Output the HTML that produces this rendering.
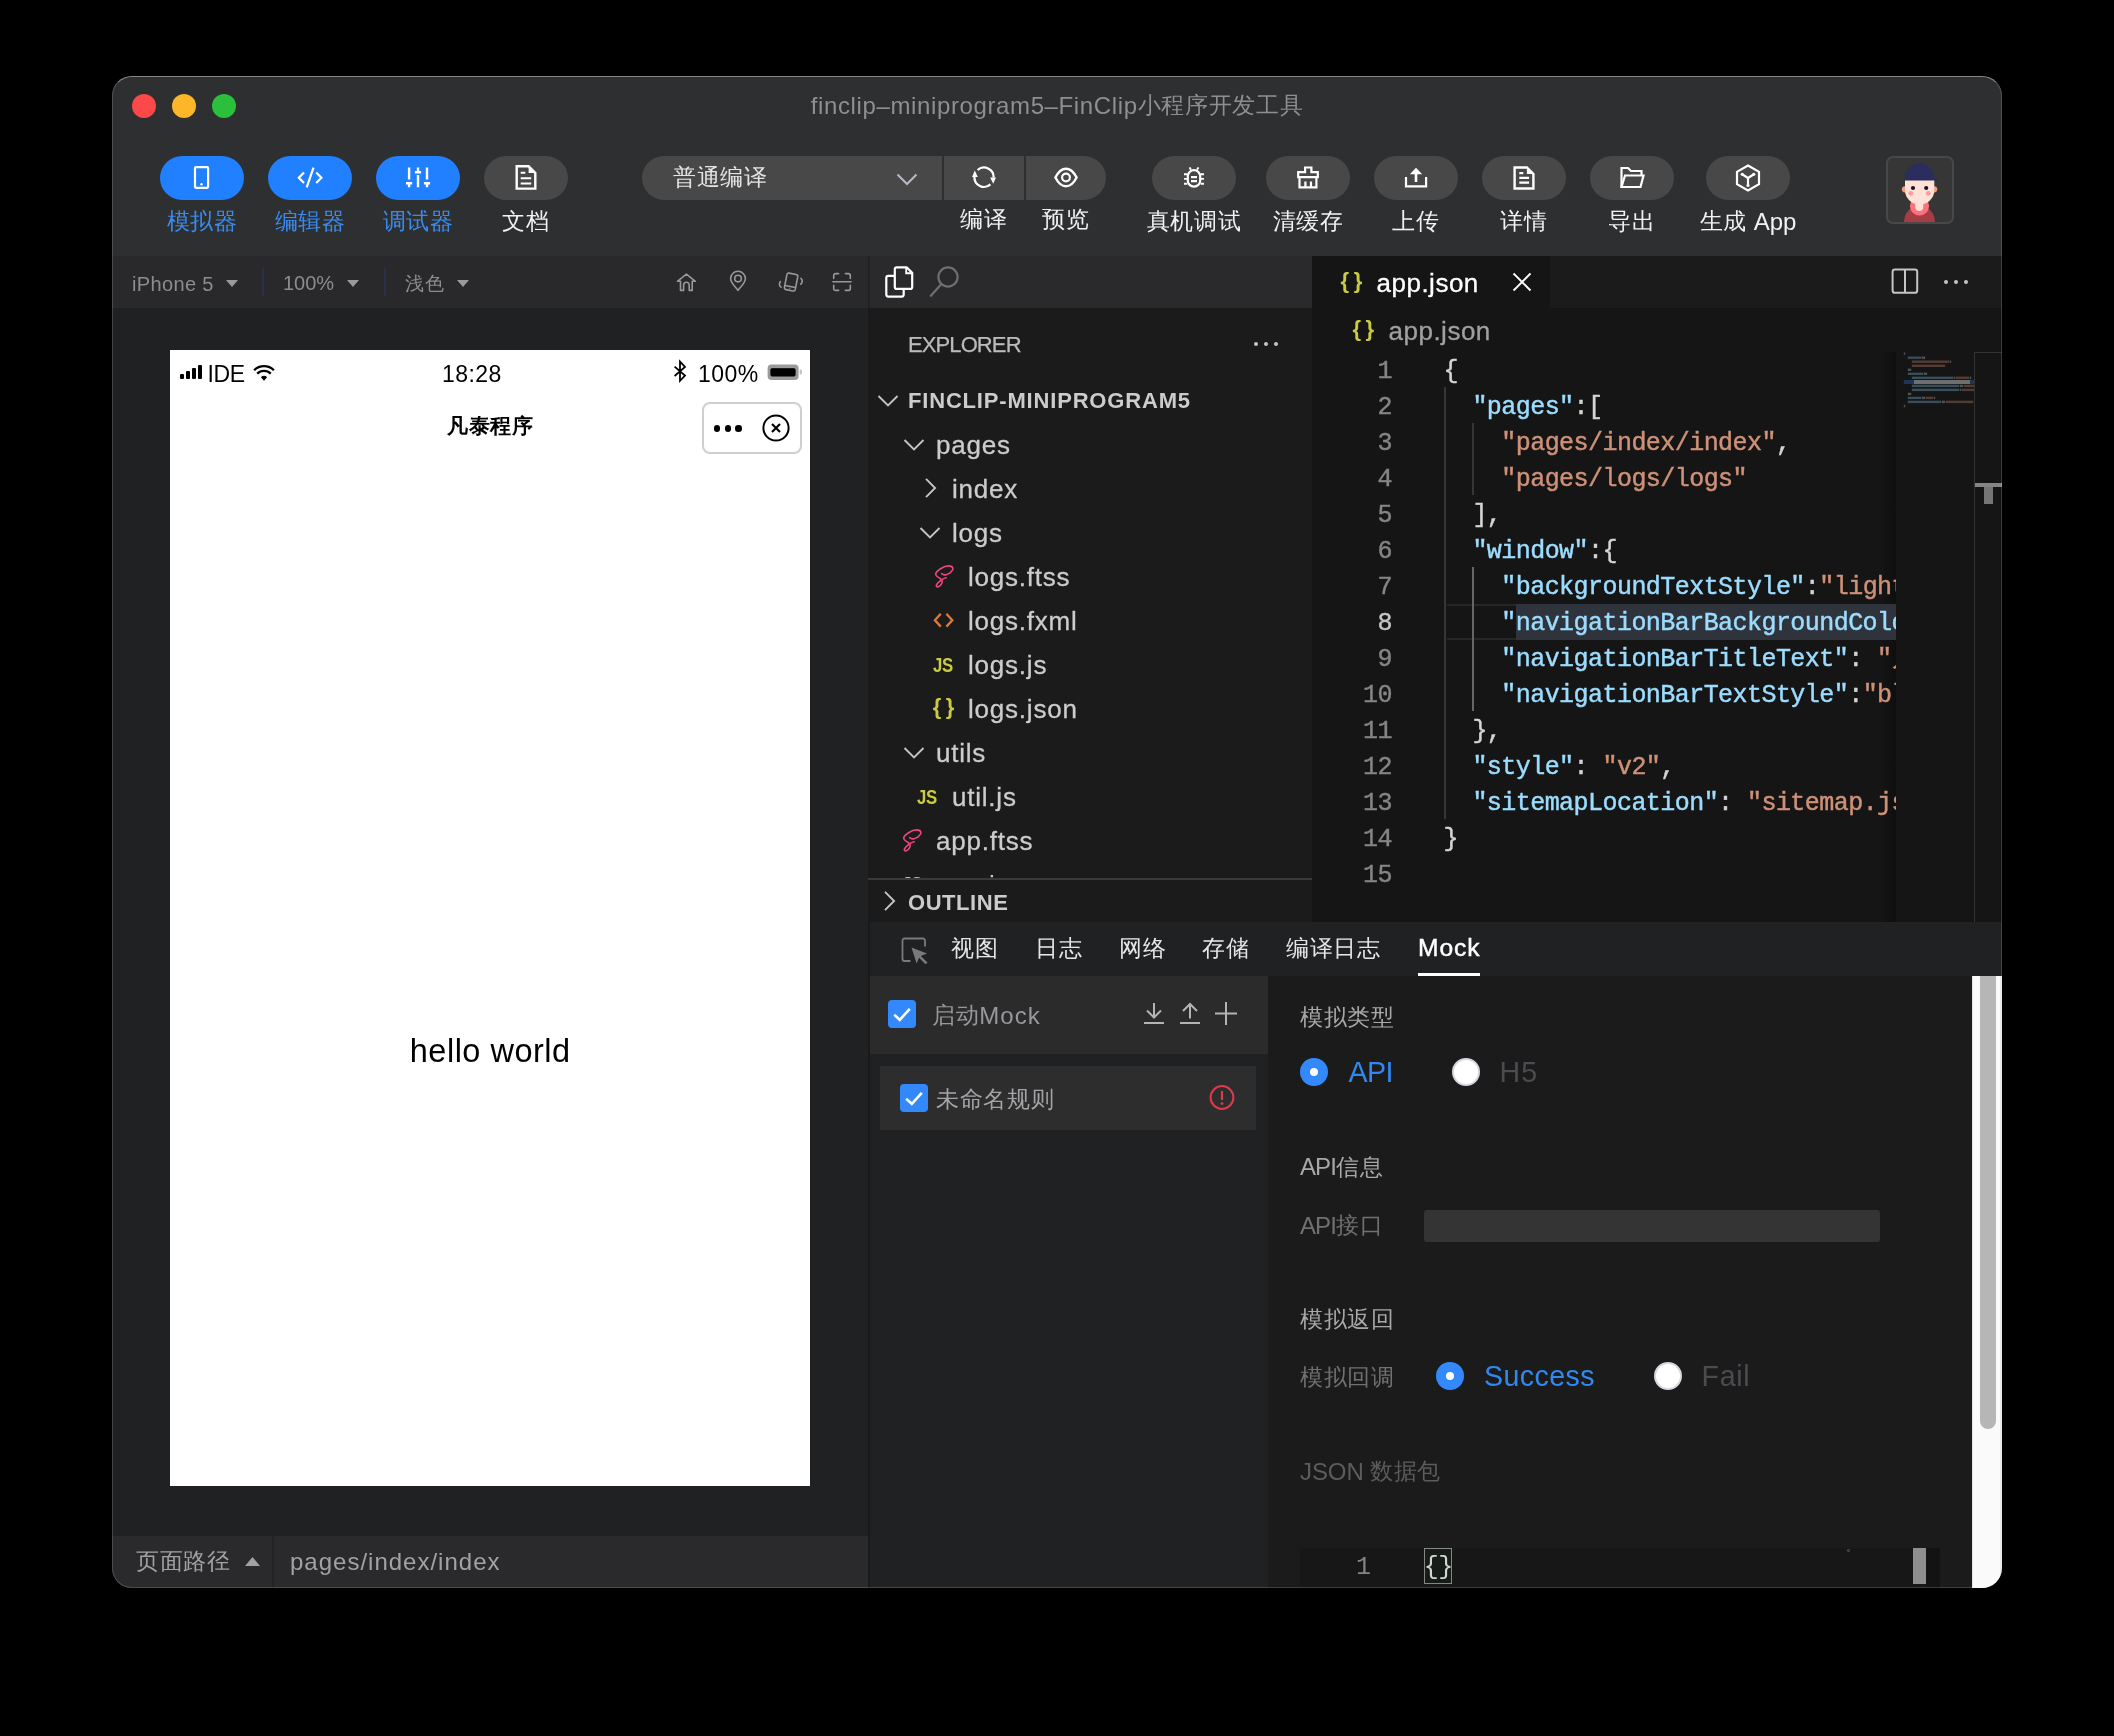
<!DOCTYPE html>
<html lang="zh"><head><meta charset="utf-8"><title>finclip-miniprogram5-FinClip</title>
<style>
html,body{margin:0;padding:0;background:#000;}
body{width:2114px;height:1736px;overflow:hidden;position:relative;font-family:"Liberation Sans",sans-serif;}
.win{position:absolute;left:112px;top:76px;width:1890px;height:1512px;border-radius:20px;overflow:hidden;background:#2e2f31;}
.pg{position:absolute;left:-112px;top:-76px;width:2114px;height:1736px;will-change:transform;}
.a{position:absolute;}
.t{position:absolute;white-space:nowrap;}
.c{font-size:.972em;letter-spacing:.028em;position:relative;top:-.03em}
.m{font-family:"Liberation Mono",monospace;}
.k{color:#9cdcfe}.s{color:#ce9178}.p{color:#d4d4d4}
</style></head><body>
<div class="win"><div class="pg">
<div class="a" style="left:112px;top:76px;width:1890px;height:180px;background:#2e2f31;"></div>
<div class="a" style="left:112px;top:256px;width:757px;height:52px;background:#29292c;"></div>
<div class="a" style="left:112px;top:308px;width:757px;height:1228px;background:#202123;"></div>
<div class="a" style="left:112px;top:1536px;width:757px;height:52px;background:#2a2a2d;"></div>
<div class="a" style="left:868px;top:256px;width:444px;height:52px;background:#2a2a2c;"></div>
<div class="a" style="left:868px;top:256px;width:2px;height:52px;background:#222224;"></div>
<div class="a" style="left:868px;top:308px;width:444px;height:614px;background:#1b1b1b;"></div>
<div class="a" style="left:868px;top:308px;width:2px;height:1280px;background:#1a1a1b;"></div>
<div class="a" style="left:1312px;top:256px;width:690px;height:52px;background:#1b1b1b;"></div>
<div class="a" style="left:1312px;top:256px;width:238px;height:52px;background:#151515;"></div>
<div class="a" style="left:1312px;top:308px;width:690px;height:614px;background:#151515;"></div>
<div class="a" style="left:870px;top:922px;width:1132px;height:54px;background:#29292b;"></div>
<div class="a" style="left:870px;top:976px;width:398px;height:612px;background:#222224;"></div>
<div class="a" style="left:870px;top:976px;width:398px;height:78px;background:#2b2b2b;"></div>
<div class="a" style="left:1268px;top:976px;width:704px;height:612px;background:#1b1b1c;"></div>
<div class="a" style="left:1972px;top:976px;width:30px;height:612px;background:#f4f4f4;"></div>
<div class="a" style="left:132px;top:94px;width:24px;height:24px;background:#fc4848;border-radius:50%;"></div>
<div class="a" style="left:172px;top:94px;width:24px;height:24px;background:#fdb52a;border-radius:50%;"></div>
<div class="a" style="left:212px;top:94px;width:24px;height:24px;background:#2ac03c;border-radius:50%;"></div>
<div class="t" style="left:557px;width:1000px;text-align:center;top:86.8px;height:38px;line-height:38px;font-size:24px;color:#8f8f92;"><span style="letter-spacing:0.62px">finclip–miniprogram5–FinClip</span><span class="c">小程序开发工具</span></div>
<div class="a" style="left:160px;top:156px;width:84px;height:44px;background:#2080ff;border-radius:22px;"></div>
<div class="a" style="left:268px;top:156px;width:84px;height:44px;background:#2080ff;border-radius:22px;"></div>
<div class="a" style="left:376px;top:156px;width:84px;height:44px;background:#2080ff;border-radius:22px;"></div>
<div class="a" style="left:484px;top:156px;width:84px;height:44px;background:#484848;border-radius:22px;"></div>
<div class="t" style="left:-298px;width:1000px;text-align:center;top:202.5px;height:38px;line-height:38px;font-size:24px;color:#3b8bef;"><span class="c">模拟器</span></div>
<div class="t" style="left:-190px;width:1000px;text-align:center;top:202.5px;height:38px;line-height:38px;font-size:24px;color:#3b8bef;"><span class="c">编辑器</span></div>
<div class="t" style="left:-82px;width:1000px;text-align:center;top:202.5px;height:38px;line-height:38px;font-size:24px;color:#3b8bef;"><span class="c">调试器</span></div>
<div class="t" style="left:26px;width:1000px;text-align:center;top:202.5px;height:38px;line-height:38px;font-size:24px;color:#f2f2f2;"><span class="c">文档</span></div>
<svg class="a" style="left:160px;top:156px;" width="84" height="44" viewBox="0 0 84 44"><rect x="35" y="11.2" width="13.1" height="20.6" rx="1" fill="none" stroke="#fff" stroke-width="2.2" stroke-linecap="butt" stroke-linejoin="miter"/><circle cx="41.5" cy="28.2" r="1.2" fill="#fff"/></svg>
<svg class="a" style="left:268px;top:156px;" width="84" height="44" viewBox="0 0 84 44"><path d="M36 16.4 L30.8 21.7 L36 27 M48.2 16.4 L53.4 21.7 L48.2 27 M45.5 11.6 L38.7 31.3" fill="none" stroke="#fff" stroke-width="2.2" stroke-linecap="butt" stroke-linejoin="miter"/></svg>
<svg class="a" style="left:376px;top:156px;" width="84" height="44" viewBox="0 0 84 44"><path d="M33.1 11.5 V23.4 M33.1 26.2 V31.2 M42 11.5 V16 M42 19 V31.2 M51 11.5 V23.4 M51 26.2 V31.2 M30 27.2 H36.2 M38.9 16.2 H45.1 M47.9 27.2 H54.1" fill="none" stroke="#fff" stroke-width="2.4"/></svg>
<svg class="a" style="left:484px;top:156px;" width="84" height="44" viewBox="0 0 84 44"><path d="M32.7 10.3 H44.6 L51.3 17 V32.6 H32.7 Z" fill="none" stroke="#fff" stroke-width="2.4"/><path d="M44.6 10.3 V17 H51.3 Z" fill="#fff"/><path d="M36.7 16.7 H41.3 M36.7 22.2 H47.2 M36.7 27.6 H47.2" fill="none" stroke="#fff" stroke-width="2"/></svg>
<div class="a" style="left:642px;top:156px;width:300px;height:44px;background:#484848;border-radius:22px 0 0 22px;"></div>
<div class="a" style="left:944px;top:156px;width:80px;height:44px;background:#484848;"></div>
<div class="a" style="left:1026px;top:156px;width:80px;height:44px;background:#484848;border-radius:0 22px 22px 0;"></div>
<div class="t" style="left:673px;top:159.0px;height:38px;line-height:38px;font-size:24px;color:#e4e4e4;"><span class="c">普通编译</span></div>
<svg class="a" style="left:892px;top:168px;" width="30" height="22" viewBox="0 0 30 22"><path d="M5.5 6.5 L15 16 L24.5 6.5" fill="none" stroke="#b9b9c6" stroke-width="2"/></svg>
<div class="t" style="left:484px;width:1000px;text-align:center;top:200.5px;height:38px;line-height:38px;font-size:24px;color:#f2f2f2;"><span class="c">编译</span></div>
<div class="t" style="left:566px;width:1000px;text-align:center;top:200.5px;height:38px;line-height:38px;font-size:24px;color:#f2f2f2;"><span class="c">预览</span></div>
<svg class="a" style="left:944px;top:156px;" width="80" height="44" viewBox="0 0 80 44"><path d="M33.6 14.0 A9.6 9.6 0 0 1 49.6 21.6" fill="none" stroke="#fff" stroke-width="2.2" stroke-linecap="butt" stroke-linejoin="miter"/><path d="M46.4 28.4 A9.6 9.6 0 0 1 30.4 20.8" fill="none" stroke="#fff" stroke-width="2.2" stroke-linecap="butt" stroke-linejoin="miter"/><path d="M46.2 21.4 H52 L49.2 27.8 Z" fill="#fff"/><path d="M28 21 H33.8 L30.8 14.6 Z" fill="#fff"/></svg>
<svg class="a" style="left:1026px;top:156px;" width="80" height="44" viewBox="0 0 80 44"><path d="M29.4 21.5 C33 14.5 36.5 12.7 40 12.7 C43.5 12.7 47 14.5 50.6 21.5 C47 28.5 43.5 30.3 40 30.3 C36.5 30.3 33 28.5 29.4 21.5 Z" fill="none" stroke="#fff" stroke-width="2.4" stroke-linejoin="miter"/><circle cx="40" cy="21.5" r="3.9" fill="none" stroke="#fff" stroke-width="2.2" stroke-linecap="butt" stroke-linejoin="miter"/></svg>
<div class="a" style="left:1152px;top:156px;width:84px;height:44px;background:#484848;border-radius:22px;"></div>
<div class="t" style="left:694px;width:1000px;text-align:center;top:202.5px;height:38px;line-height:38px;font-size:24px;color:#f2f2f2;"><span class="c">真机调试</span></div>
<div class="a" style="left:1266px;top:156px;width:84px;height:44px;background:#484848;border-radius:22px;"></div>
<div class="t" style="left:808px;width:1000px;text-align:center;top:202.5px;height:38px;line-height:38px;font-size:24px;color:#f2f2f2;"><span class="c">清缓存</span></div>
<div class="a" style="left:1374px;top:156px;width:84px;height:44px;background:#484848;border-radius:22px;"></div>
<div class="t" style="left:916px;width:1000px;text-align:center;top:202.5px;height:38px;line-height:38px;font-size:24px;color:#f2f2f2;"><span class="c">上传</span></div>
<div class="a" style="left:1482px;top:156px;width:84px;height:44px;background:#484848;border-radius:22px;"></div>
<div class="t" style="left:1024px;width:1000px;text-align:center;top:202.5px;height:38px;line-height:38px;font-size:24px;color:#f2f2f2;"><span class="c">详情</span></div>
<div class="a" style="left:1590px;top:156px;width:84px;height:44px;background:#484848;border-radius:22px;"></div>
<div class="t" style="left:1132px;width:1000px;text-align:center;top:202.5px;height:38px;line-height:38px;font-size:24px;color:#f2f2f2;"><span class="c">导出</span></div>
<div class="a" style="left:1706px;top:156px;width:84px;height:44px;background:#484848;border-radius:22px;"></div>
<div class="t" style="left:1248px;width:1000px;text-align:center;top:202.5px;height:38px;line-height:38px;font-size:24px;color:#f2f2f2;"><span class="c">生成</span> App</div>
<svg class="a" style="left:1152px;top:156px;" width="84" height="44" viewBox="0 0 84 44"><rect x="35.8" y="14.1" width="12.4" height="16.6" rx="6.2" fill="none" stroke="#fff" stroke-width="2.2" stroke-linecap="butt" stroke-linejoin="miter"/><path d="M39 21.1 H45 M39 25.2 H45" fill="none" stroke="#fff" stroke-width="2.2" stroke-linecap="butt" stroke-linejoin="miter"/><path d="M32 18.2 H35.4 M32 22.9 H35.4 M32 27.7 H35.4 M48.6 18.2 H52 M48.6 22.9 H52 M48.6 27.7 H52 M38.9 13.8 L37.6 11.4 M45.1 13.8 L46.4 11.4" fill="none" stroke="#fff" stroke-width="1.9"/></svg>
<svg class="a" style="left:1266px;top:156px;" width="84" height="44" viewBox="0 0 84 44"><path d="M39.1 11.5 H45.4 V16.2 H51.8 V21.2 H32.2 V16.2 H39.1 Z" fill="none" stroke="#fff" stroke-width="2.2" stroke-linecap="butt" stroke-linejoin="miter"/><path d="M33.5 21.2 V31.3 H50.4 V21.2 M39.4 25.5 V31 M45 25.5 V31" fill="none" stroke="#fff" stroke-width="2.2" stroke-linecap="butt" stroke-linejoin="miter"/></svg>
<svg class="a" style="left:1374px;top:156px;" width="84" height="44" viewBox="0 0 84 44"><path d="M32 21.1 V30.3 H52.1 V21.1" fill="none" stroke="#fff" stroke-width="2.2" stroke-linecap="butt" stroke-linejoin="miter"/><path d="M42 26 V16" fill="none" stroke="#fff" stroke-width="2.6"/><path d="M35.9 18.2 L42 11.7 L48.2 18.2 Z" fill="#fff"/></svg>
<svg class="a" style="left:1482px;top:156px;" width="84" height="44" viewBox="0 0 84 44"><path d="M32.6 11.5 H44.9 L51.4 18 V32.5 H32.6 Z" fill="none" stroke="#fff" stroke-width="2.4"/><path d="M44.9 11.5 V18 H51.4 Z" fill="#fff"/><path d="M37.3 17.2 H41.3 M37.3 21.9 H47.1 M37.3 26.6 H47.1" stroke="#fff" stroke-width="2.2" fill="none"/></svg>
<svg class="a" style="left:1590px;top:156px;" width="84" height="44" viewBox="0 0 84 44"><path d="M31.5 31 V12 H38 L41 15 H51.5 V19" fill="none" stroke="#fff" stroke-width="2.2" stroke-linecap="butt" stroke-linejoin="miter"/><path d="M31.5 31 L35 19.5 H53.5 L50.5 31 Z" fill="none" stroke="#fff" stroke-width="2.2" stroke-linecap="butt" stroke-linejoin="miter"/></svg>
<svg class="a" style="left:1706px;top:156px;" width="84" height="44" viewBox="0 0 84 44"><path d="M42 9.5 L53 15.8 V28.2 L42 34.5 L31 28.2 V15.8 Z" fill="none" stroke="#fff" stroke-width="2.2" stroke-linecap="butt" stroke-linejoin="miter"/><path d="M42 22 V29 M42 22 L36.5 18.5 M42 22 L47.5 18.5" fill="none" stroke="#fff" stroke-width="2.2" stroke-linecap="butt" stroke-linejoin="miter"/><circle cx="36.2" cy="18.3" r="1.6" fill="#fff"/><circle cx="47.8" cy="18.3" r="1.6" fill="#fff"/><circle cx="42" cy="29.5" r="1.6" fill="#fff"/></svg>
<div class="a" style="left:1886px;top:156px;width:68px;height:68px;background:#363636;border-radius:7px;box-sizing:border-box;border:2px solid #484848;"></div>
<svg class="a" style="left:1888px;top:158px;" width="64" height="64" viewBox="0 0 64 64">
<defs><clipPath id="avc"><rect x="0" y="0" width="64" height="64"/></clipPath></defs>
<g clip-path="url(#avc)">
<circle cx="31.5" cy="63.5" r="15.4" fill="#a63d44"/>
<circle cx="31.5" cy="48" r="9.6" fill="#fc727a"/>
<path d="M27.3 40 H35.2 V49 A3.95 3.95 0 0 1 27.3 49 Z" fill="#ffe3d8"/>
<circle cx="16.9" cy="31.3" r="3.1" fill="#f19b82"/><circle cx="46.2" cy="31.3" r="3.1" fill="#f19b82"/>
<path d="M17 22 H46.3 V32 A14.65 14.65 0 0 1 17 32 Z" fill="#ffe1d5"/>
<path d="M17 22.4 V20.2 A14.65 14.65 0 0 1 46.3 20.2 L49.8 20.4 V22.4 Z" fill="#2b2d5f"/>
<circle cx="25" cy="30" r="2.1" fill="#14142a"/><circle cx="38.2" cy="30" r="2.1" fill="#14142a"/>
<circle cx="22.8" cy="35.3" r="2.4" fill="#ff9a9e"/><circle cx="40.3" cy="35.3" r="2.4" fill="#ff9a9e"/>
</g></svg>
<div class="t" style="left:132px;top:267.5px;height:32px;line-height:32px;font-size:20px;color:#8c8c90;letter-spacing:0.35px;">iPhone 5</div>
<div class="t" style="left:283px;top:267.2px;height:32px;line-height:32px;font-size:20px;color:#8c8c90;">100%</div>
<div class="t" style="left:405px;top:267.2px;height:32px;line-height:32px;font-size:20px;color:#8c8c90;"><span class="c">浅色</span></div>
<svg class="a" style="left:226px;top:280px;" width="12" height="7" viewBox="0 0 12 7"><path d="M0 0 H12 L6 7 Z" fill="#9a9a9e"/></svg>
<svg class="a" style="left:347px;top:280px;" width="12" height="7" viewBox="0 0 12 7"><path d="M0 0 H12 L6 7 Z" fill="#9a9a9e"/></svg>
<svg class="a" style="left:457px;top:280px;" width="12" height="7" viewBox="0 0 12 7"><path d="M0 0 H12 L6 7 Z" fill="#9a9a9e"/></svg>
<div class="a" style="left:262px;top:268px;width:2px;height:28px;background:#283148;"></div>
<div class="a" style="left:384px;top:268px;width:2px;height:28px;background:#283148;"></div>
<svg class="a" style="left:674px;top:270px;" width="24" height="24" viewBox="0 0 24 24"><path d="M3.4 11.3 L12.4 4.1 L21.4 11.3 H18.2 V20.4 H15.2 V15 A2.8 2.8 0 0 0 9.6 15 V20.4 H6.5 V11.3 Z" fill="none" stroke="#98989c" stroke-width="1.6" stroke-linejoin="round" stroke-linecap="round"/></svg>
<svg class="a" style="left:726px;top:269px;" width="24" height="24" viewBox="0 0 24 24"><path d="M12 21.3 C7.6 16 4.6 13.2 4.6 9.7 A7.4 7.4 0 0 1 19.4 9.7 C19.4 13.2 16.4 16 12 21.3 Z" fill="none" stroke="#98989c" stroke-width="1.6" stroke-linejoin="round" stroke-linecap="round"/><circle cx="12" cy="9.6" r="3.3" fill="none" stroke="#98989c" stroke-width="1.6" stroke-linejoin="round" stroke-linecap="round"/></svg>
<svg class="a" style="left:776px;top:268px;" width="29" height="28" viewBox="0 0 29 28"><g transform="rotate(11 15 14)"><rect x="9.6" y="5.6" width="11" height="16.8" rx="2" fill="none" stroke="#98989c" stroke-width="1.6" stroke-linejoin="round" stroke-linecap="round"/><path d="M9.8 18.6 H20.4" fill="none" stroke="#98989c" stroke-width="1.6" stroke-linejoin="round" stroke-linecap="round"/><circle cx="15" cy="20.5" r="0.6" fill="#98989c"/></g><path d="M4.4 13.6 C2.8 15.4 3.2 17.9 5 19.2 M25 10.4 C26.8 12.2 26.6 14.6 24.8 16.2" fill="none" stroke="#98989c" stroke-width="1.6" stroke-linejoin="round" stroke-linecap="round"/></svg>
<svg class="a" style="left:830px;top:270px;" width="24" height="24" viewBox="0 0 24 24"><path d="M3.7 8.4 V5.6 A2 2 0 0 1 5.7 3.6 H8.6 M15.4 3.6 H18.3 A2 2 0 0 1 20.3 5.6 V8.4 M20.3 15.4 V18.4 A2 2 0 0 1 18.3 20.4 H15.4 M8.6 20.4 H5.7 A2 2 0 0 1 3.700 18.4 V15.4 M2.9 11.8 H21.1" fill="none" stroke="#98989c" stroke-width="1.6" stroke-linejoin="round" stroke-linecap="round"/></svg>
<div class="t" style="left:136px;top:1543.0px;height:38px;line-height:38px;font-size:24px;color:#a2a2a4;"><span class="c">页面路径</span></div>
<svg class="a" style="left:245px;top:1557px;" width="15" height="9" viewBox="0 0 15 9"><path d="M0 9 H15 L7.5 0 Z" fill="#a2a2a4"/></svg>
<div class="a" style="left:272px;top:1536px;width:2px;height:52px;background:#232325;"></div>
<div class="t" style="left:290px;top:1543.0px;height:38px;line-height:38px;font-size:24px;color:#a2a2a4;letter-spacing:1.0px;">pages/index/index</div>
<div class="a" style="left:170px;top:350px;width:640px;height:1136px;background:#fff;"></div>
<div class="a" style="left:179.6px;top:374px;width:4.4px;height:4.800000000000011px;background:#000;border-radius:1px;"></div>
<div class="a" style="left:185.6px;top:371px;width:4.4px;height:7.800000000000011px;background:#000;border-radius:1px;"></div>
<div class="a" style="left:191.6px;top:367.5px;width:4.4px;height:11.300000000000011px;background:#000;border-radius:1px;"></div>
<div class="a" style="left:197.6px;top:364.5px;width:4.4px;height:14.300000000000011px;background:#000;border-radius:1px;"></div>
<div class="t" style="left:207.5px;top:355.5px;height:36px;line-height:36px;font-size:23px;color:#000;letter-spacing:-0.4px;">IDE</div>
<svg class="a" style="left:253px;top:364.2px;" width="22" height="17.4" viewBox="0 0 24 19"><path d="M12 18.2 L8.6 14.4 A5 5 0 0 1 15.4 14.4 Z" fill="#000"/><path d="M4.6 10.6 A10.4 10.4 0 0 1 19.4 10.6" fill="none" stroke="#000" stroke-width="2.6"/><path d="M1.2 6.8 A15.2 15.2 0 0 1 22.8 6.8" fill="none" stroke="#000" stroke-width="2.6"/></svg>
<div class="t" style="left:442px;top:355.5px;height:36px;line-height:36px;font-size:23px;color:#000;letter-spacing:0.45px;">18:28</div>
<svg class="a" style="left:672px;top:359px;" width="16" height="25" viewBox="0 0 16 25"><path d="M2.6 7.6 L13 16.6 L8 21.8 V2.6 L13 7.9 L2.600 17" fill="none" stroke="#000" stroke-width="1.8" stroke-linejoin="miter"/></svg>
<div class="t" style="left:698px;top:355.5px;height:36px;line-height:36px;font-size:23px;color:#000;letter-spacing:0.5px;">100%</div>
<svg class="a" style="left:766px;top:362px;" width="38" height="20" viewBox="0 0 38 20"><defs><filter id="bb" x="-20%" y="-30%" width="140%" height="160%"><feGaussianBlur stdDeviation="0.7"/></filter></defs><rect x="1.6" y="2.5" width="31" height="15.6" rx="4" fill="#9a9a9a" filter="url(#bb)"/><rect x="4.4" y="6.2" width="25.2" height="8.2" rx="1.6" fill="#000" filter="url(#bb)"/><rect x="5" y="6.8" width="24" height="7" rx="1.2" fill="#000"/><rect x="33.7" y="7.6" width="2.2" height="5" rx="1.1" fill="#c2c2c2"/></svg>
<div class="t" style="left:-9.5px;width:1000px;text-align:center;top:410.0px;height:34px;line-height:34px;font-size:21.6px;color:#000;font-weight:700;"><span class="c">凡泰程序</span></div>
<div class="a" style="left:702px;top:402px;width:100px;height:52px;background:#fff;box-sizing:border-box;border:2px solid #cfcfcf;border-radius:8px;"></div>
<div class="a" style="left:713.9000000000001px;top:425.1px;width:6.6px;height:6.6px;background:#000;border-radius:50%;"></div>
<div class="a" style="left:724.7px;top:425.1px;width:6.6px;height:6.6px;background:#000;border-radius:50%;"></div>
<div class="a" style="left:735.3000000000001px;top:425.1px;width:6.6px;height:6.6px;background:#000;border-radius:50%;"></div>
<svg class="a" style="left:760px;top:412px;" width="32" height="32" viewBox="0 0 32 32"><circle cx="16" cy="16" r="12.6" fill="none" stroke="#000" stroke-width="2"/><path d="M12 12 L20 20 M20 12 L12 20" stroke="#000" stroke-width="2.2" fill="none"/></svg>
<div class="t" style="left:-9.800000000000011px;width:1000px;text-align:center;top:1024.8px;height:52px;line-height:52px;font-size:32.5px;color:#000;letter-spacing:0.5px;">hello world</div>
<svg class="a" style="left:884px;top:265px;" width="32" height="34" viewBox="0 0 32 34"><path d="M12.8 2.3 H22.6 L28.2 7.9 V21.9 A2 2 0 0 1 26.2 23.9 H12.8 A2 2 0 0 1 10.8 21.9 V4.3 A2 2 0 0 1 12.8 2.3 Z" fill="none" stroke="#fff" stroke-width="2.2" stroke-linejoin="round"/><path d="M22.2 2.6 V8.3 H28" fill="none" stroke="#fff" stroke-width="1.9"/><path d="M10.8 10.8 H4.3 A2 2 0 0 0 2.3 12.8 V29.6 A2 2 0 0 0 4.3 31.6 H17.7 A2 2 0 0 0 19.7 29.6 V23.9" fill="none" stroke="#fff" stroke-width="2.2"/></svg>
<svg class="a" style="left:928px;top:265px;" width="32" height="34" viewBox="0 0 32 34"><circle cx="20" cy="12" r="9.6" fill="none" stroke="#6f6f6f" stroke-width="2.2"/><path d="M13.2 19.2 L2.2 31.6" stroke="#6f6f6f" stroke-width="2.2" fill="none"/></svg>
<div class="t" style="left:908px;top:326.5px;height:36px;line-height:36px;font-size:22px;color:#bbbbbb;letter-spacing:-0.9px;-webkit-text-stroke:0.25px #bbbbbb;">EXPLORER</div>
<div class="a" style="left:1253.9px;top:341.9px;width:4.2px;height:4.2px;background:#c5c5c5;border-radius:50%;"></div>
<div class="a" style="left:1263.9px;top:341.9px;width:4.2px;height:4.2px;background:#c5c5c5;border-radius:50%;"></div>
<div class="a" style="left:1273.9px;top:341.9px;width:4.2px;height:4.2px;background:#c5c5c5;border-radius:50%;"></div>
<svg class="a" style="left:876px;top:393px;" width="24" height="16" viewBox="0 0 24 16"><path d="M2.5 3 L12 12.5 L21.5 3" fill="none" stroke="#c5c5c5" stroke-width="1.9" stroke-linejoin="miter"/></svg>
<div class="t" style="left:908px;top:383.0px;height:36px;line-height:36px;font-size:22px;color:#cccccc;letter-spacing:0.82px;font-weight:700;">FINCLIP-MINIPROGRAM5</div>
<svg class="a" style="left:902px;top:437px;" width="24" height="16" viewBox="0 0 24 16"><path d="M2.5 3 L12 12.5 L21.5 3" fill="none" stroke="#c5c5c5" stroke-width="1.9" stroke-linejoin="miter"/></svg>
<div class="t" style="left:936px;top:424.0px;height:42px;line-height:42px;font-size:26px;color:#cccccc;letter-spacing:0.78px;-webkit-text-stroke:0.3px #cccccc;">pages</div>
<svg class="a" style="left:923px;top:476.2px;" width="16" height="24" viewBox="0 0 16 24"><path d="M3 2.900 L12.1 12 L3 21.1" fill="none" stroke="#c5c5c5" stroke-width="1.9" stroke-linejoin="miter"/></svg>
<div class="t" style="left:952px;top:468.0px;height:42px;line-height:42px;font-size:26px;color:#cccccc;letter-spacing:0.78px;-webkit-text-stroke:0.3px #cccccc;">index</div>
<svg class="a" style="left:918px;top:525px;" width="24" height="16" viewBox="0 0 24 16"><path d="M2.5 3 L12 12.5 L21.5 3" fill="none" stroke="#c5c5c5" stroke-width="1.9" stroke-linejoin="miter"/></svg>
<div class="t" style="left:952px;top:512.0px;height:42px;line-height:42px;font-size:26px;color:#cccccc;letter-spacing:0.78px;-webkit-text-stroke:0.3px #cccccc;">logs</div>
<svg class="a" style="left:932.5px;top:564px;" width="22" height="24" viewBox="0 0 22 24"><path d="M8.6 9.7 C10 10.9 12 11 13.2 10.7 C15.5 10.2 17.3 9 18.4 7.6 C19.6 6.2 20.3 5.3 20 4.5 C19.5 2.8 17.8 1.9 15.8 1.9 C13 1.9 10.2 3 8 4.5 C5.4 6.2 3.4 7.8 2.9 9.1 C2.5 10.2 2.7 11 3.4 11.7 C4.6 13 6.6 14 8 15.1 C8.6 15.6 9 16.2 9.1 16.9 C9.3 18.3 8.9 19.7 8 20.8 C7 22 5.8 22.9 4.7 22.9 C3.6 22.9 3 22.1 3.4 21.1 C3.9 19.9 4.9 18.8 6 17.9 C7 17 8 16.1 9.1 15.4 C10.3 14.7 11.7 14.1 13.2 13.8" fill="none" stroke="#f0447c" stroke-width="1.6" stroke-linecap="round" stroke-linejoin="round"/></svg>
<div class="t" style="left:968px;top:556.0px;height:42px;line-height:42px;font-size:26px;color:#cccccc;letter-spacing:0.78px;-webkit-text-stroke:0.3px #cccccc;">logs.ftss</div>
<svg class="a" style="left:933px;top:612px;" width="22" height="18" viewBox="0 0 22 18"><path d="M7.8 1.8 L1.9 8.2 L7.8 14.6 M13.4 1.8 L19.3 8.2 L13.4 14.6" fill="none" stroke="#e37933" stroke-width="2.3"/></svg>
<div class="t" style="left:968px;top:600.0px;height:42px;line-height:42px;font-size:26px;color:#cccccc;letter-spacing:0.78px;-webkit-text-stroke:0.3px #cccccc;">logs.fxml</div>
<div class="t" style="left:933px;top:650px;height:30px;line-height:30px;font-size:21px;font-weight:700;color:#cbcb41;transform:scaleX(0.8);transform-origin:0 50%;letter-spacing:-0.5px;">JS</div>
<div class="t" style="left:968px;top:644.0px;height:42px;line-height:42px;font-size:26px;color:#cccccc;letter-spacing:0.78px;-webkit-text-stroke:0.3px #cccccc;">logs.js</div>
<div class="t" style="left:932.7px;top:692.3px;height:30px;line-height:30px;font-size:22px;font-weight:700;color:#cbcb41;letter-spacing:4.5px;">{}</div>
<div class="t" style="left:968px;top:688.0px;height:42px;line-height:42px;font-size:26px;color:#cccccc;letter-spacing:0.78px;-webkit-text-stroke:0.3px #cccccc;">logs.json</div>
<svg class="a" style="left:902px;top:745px;" width="24" height="16" viewBox="0 0 24 16"><path d="M2.5 3 L12 12.5 L21.5 3" fill="none" stroke="#c5c5c5" stroke-width="1.9" stroke-linejoin="miter"/></svg>
<div class="t" style="left:936px;top:732.0px;height:42px;line-height:42px;font-size:26px;color:#cccccc;letter-spacing:0.78px;-webkit-text-stroke:0.3px #cccccc;">utils</div>
<div class="t" style="left:917px;top:782px;height:30px;line-height:30px;font-size:21px;font-weight:700;color:#cbcb41;transform:scaleX(0.8);transform-origin:0 50%;letter-spacing:-0.5px;">JS</div>
<div class="t" style="left:952px;top:776.0px;height:42px;line-height:42px;font-size:26px;color:#cccccc;letter-spacing:0.78px;-webkit-text-stroke:0.3px #cccccc;">util.js</div>
<svg class="a" style="left:900.5px;top:828px;" width="22" height="24" viewBox="0 0 22 24"><path d="M8.6 9.7 C10 10.9 12 11 13.2 10.7 C15.5 10.2 17.3 9 18.4 7.6 C19.6 6.2 20.3 5.3 20 4.5 C19.5 2.8 17.8 1.9 15.8 1.9 C13 1.9 10.2 3 8 4.5 C5.4 6.2 3.4 7.8 2.9 9.1 C2.5 10.2 2.7 11 3.4 11.7 C4.6 13 6.6 14 8 15.1 C8.6 15.6 9 16.2 9.1 16.9 C9.3 18.3 8.9 19.7 8 20.8 C7 22 5.8 22.9 4.7 22.9 C3.6 22.9 3 22.1 3.4 21.1 C3.9 19.9 4.9 18.8 6 17.9 C7 17 8 16.1 9.1 15.4 C10.3 14.7 11.7 14.1 13.2 13.8" fill="none" stroke="#f0447c" stroke-width="1.6" stroke-linecap="round" stroke-linejoin="round"/></svg>
<div class="t" style="left:936px;top:820.0px;height:42px;line-height:42px;font-size:26px;color:#cccccc;letter-spacing:0.78px;-webkit-text-stroke:0.3px #cccccc;">app.ftss</div>
<div class="a" style="left:870px;top:862px;width:442px;height:16px;overflow:hidden;">
<div class="t" style="left:32px;top:7px;height:30px;line-height:30px;font-size:21px;font-weight:700;color:#cbcb41;transform:scaleX(0.8);transform-origin:0 50%;">JS</div>
<div class="t" style="left:66px;top:2px;height:42px;line-height:42px;font-size:26px;color:#cccccc;letter-spacing:0.6px;">app.js</div>
</div>
<div class="a" style="left:868px;top:878px;width:444px;height:2px;background:#3a3a3a;"></div>
<svg class="a" style="left:882px;top:889.2px;" width="16" height="24" viewBox="0 0 16 24"><path d="M3 2.900 L12.1 12 L3 21.1" fill="none" stroke="#c5c5c5" stroke-width="1.9" stroke-linejoin="miter"/></svg>
<div class="t" style="left:908px;top:885.0px;height:36px;line-height:36px;font-size:22px;color:#cccccc;letter-spacing:0.55px;font-weight:700;">OUTLINE</div>
<div class="t" style="left:1340.6px;top:266.2px;height:30px;line-height:30px;font-size:22px;font-weight:700;color:#cbcb41;letter-spacing:4.5px;">{}</div>
<div class="t" style="left:1376.5px;top:261.7px;height:42px;line-height:42px;font-size:26px;color:#ffffff;letter-spacing:0.5px;-webkit-text-stroke:0.3px #ffffff;">app.json</div>
<svg class="a" style="left:1511px;top:271px;" width="22" height="22" viewBox="0 0 22 22"><path d="M2.5 2.5 L19.5 19.5 M19.5 2.5 L2.5 19.5" stroke="#fff" stroke-width="1.9" fill="none"/></svg>
<svg class="a" style="left:1890px;top:267px;" width="30" height="28" viewBox="0 0 30 28"><rect x="2.6" y="2.4" width="24.6" height="23.4" rx="2.4" fill="none" stroke="#c5c5c5" stroke-width="2"/><path d="M15 2.4 V25.8" stroke="#c5c5c5" stroke-width="2"/></svg>
<div class="a" style="left:1943.8px;top:279.8px;width:4.4px;height:4.4px;background:#c5c5c5;border-radius:50%;"></div>
<div class="a" style="left:1953.8px;top:279.8px;width:4.4px;height:4.4px;background:#c5c5c5;border-radius:50%;"></div>
<div class="a" style="left:1963.8px;top:279.8px;width:4.4px;height:4.4px;background:#c5c5c5;border-radius:50%;"></div>
<div class="t" style="left:1352.5px;top:314px;height:30px;line-height:30px;font-size:22px;font-weight:700;color:#cbcb41;letter-spacing:4.5px;">{}</div>
<div class="t" style="left:1388.5px;top:309.9px;height:42px;line-height:42px;font-size:26px;color:#a0a0a0;letter-spacing:0.5px;-webkit-text-stroke:0.3px #a0a0a0;">app.json</div>
<div class="a" style="left:1880px;top:352px;width:16px;height:570px;background:linear-gradient(to right, rgba(0,0,0,0), rgba(0,0,0,0.32));"></div>
<div class="a" style="left:1974px;top:352px;width:28px;height:1px;background:#333333;"></div>
<div class="a" style="left:1974px;top:352px;width:1px;height:570px;background:#333333;"></div>
<div class="a" style="left:1975px;top:483px;width:27px;height:4px;background:#858585;"></div>
<div class="a" style="left:1984px;top:487px;width:9px;height:17px;background:#757575;"></div>
<div class="a" style="left:1447px;top:604px;width:449px;height:36px;background:transparent;box-sizing:border-box;border-top:2px solid #262626;border-bottom:2px solid #262626;"></div>
<div class="a" style="left:1515.8px;top:604px;width:380.2px;height:36px;background:#2f333b;"></div>
<div class="a" style="left:1444px;top:387px;width:2px;height:432px;background:#363636;"></div>
<div class="a" style="left:1472.4px;top:423px;width:2px;height:72px;background:#363636;"></div>
<div class="a" style="left:1472.4px;top:567px;width:2px;height:144px;background:#666666;"></div>
<div class="a" style="left:1430px;top:340px;width:466px;height:582px;overflow:hidden;">
<div class="t m" style="left:13.5px;top:13.5px;height:36px;line-height:36px;font-size:25px;letter-spacing:-0.55px;white-space:pre;-webkit-text-stroke:0.45px;"><span class="p">{</span></div>
<div class="t m" style="left:13.5px;top:49.5px;height:36px;line-height:36px;font-size:25px;letter-spacing:-0.55px;white-space:pre;-webkit-text-stroke:0.45px;"><span class="p">  </span><span class="k">&quot;pages&quot;</span><span class="p">:[</span></div>
<div class="t m" style="left:13.5px;top:85.5px;height:36px;line-height:36px;font-size:25px;letter-spacing:-0.55px;white-space:pre;-webkit-text-stroke:0.45px;"><span class="p">    </span><span class="s">&quot;pages/index/index&quot;</span><span class="p">,</span></div>
<div class="t m" style="left:13.5px;top:121.5px;height:36px;line-height:36px;font-size:25px;letter-spacing:-0.55px;white-space:pre;-webkit-text-stroke:0.45px;"><span class="p">    </span><span class="s">&quot;pages/logs/logs&quot;</span></div>
<div class="t m" style="left:13.5px;top:157.5px;height:36px;line-height:36px;font-size:25px;letter-spacing:-0.55px;white-space:pre;-webkit-text-stroke:0.45px;"><span class="p">  ],</span></div>
<div class="t m" style="left:13.5px;top:193.5px;height:36px;line-height:36px;font-size:25px;letter-spacing:-0.55px;white-space:pre;-webkit-text-stroke:0.45px;"><span class="p">  </span><span class="k">&quot;window&quot;</span><span class="p">:{</span></div>
<div class="t m" style="left:13.5px;top:229.5px;height:36px;line-height:36px;font-size:25px;letter-spacing:-0.55px;white-space:pre;-webkit-text-stroke:0.45px;"><span class="p">    </span><span class="k">&quot;backgroundTextStyle&quot;</span><span class="p">:</span><span class="s">&quot;light&quot;</span><span class="p">,</span></div>
<div class="t m" style="left:13.5px;top:265.5px;height:36px;line-height:36px;font-size:25px;letter-spacing:-0.55px;white-space:pre;-webkit-text-stroke:0.45px;"><span class="p">    </span><span class="k">&quot;navigationBarBackgroundColor&quot;</span><span class="p">: </span><span class="s">&quot;#fff&quot;</span><span class="p">,</span></div>
<div class="t m" style="left:13.5px;top:301.5px;height:36px;line-height:36px;font-size:25px;letter-spacing:-0.55px;white-space:pre;-webkit-text-stroke:0.45px;"><span class="p">    </span><span class="k">&quot;navigationBarTitleText&quot;</span><span class="p">: </span><span class="s">&quot;凡泰程序&quot;</span><span class="p">,</span></div>
<div class="t m" style="left:13.5px;top:337.5px;height:36px;line-height:36px;font-size:25px;letter-spacing:-0.55px;white-space:pre;-webkit-text-stroke:0.45px;"><span class="p">    </span><span class="k">&quot;navigationBarTextStyle&quot;</span><span class="p">:</span><span class="s">&quot;black&quot;</span></div>
<div class="t m" style="left:13.5px;top:373.5px;height:36px;line-height:36px;font-size:25px;letter-spacing:-0.55px;white-space:pre;-webkit-text-stroke:0.45px;"><span class="p">  },</span></div>
<div class="t m" style="left:13.5px;top:409.5px;height:36px;line-height:36px;font-size:25px;letter-spacing:-0.55px;white-space:pre;-webkit-text-stroke:0.45px;"><span class="p">  </span><span class="k">&quot;style&quot;</span><span class="p">: </span><span class="s">&quot;v2&quot;</span><span class="p">,</span></div>
<div class="t m" style="left:13.5px;top:445.5px;height:36px;line-height:36px;font-size:25px;letter-spacing:-0.55px;white-space:pre;-webkit-text-stroke:0.45px;"><span class="p">  </span><span class="k">&quot;sitemapLocation&quot;</span><span class="p">: </span><span class="s">&quot;sitemap.json&quot;</span></div>
<div class="t m" style="left:13.5px;top:481.5px;height:36px;line-height:36px;font-size:25px;letter-spacing:-0.55px;white-space:pre;-webkit-text-stroke:0.45px;"><span class="p">}</span></div>
<div class="t m" style="left:13.5px;top:517.5px;height:36px;line-height:36px;font-size:25px;letter-spacing:-0.55px;white-space:pre;-webkit-text-stroke:0.45px;"></div>
</div>
<div class="t m" style="left:1292px;width:100px;text-align:right;top:353.5px;height:36px;line-height:36px;font-size:25px;letter-spacing:-0.55px;color:#858585;-webkit-text-stroke:0.4px #858585;">1</div>
<div class="t m" style="left:1292px;width:100px;text-align:right;top:389.5px;height:36px;line-height:36px;font-size:25px;letter-spacing:-0.55px;color:#858585;-webkit-text-stroke:0.4px #858585;">2</div>
<div class="t m" style="left:1292px;width:100px;text-align:right;top:425.5px;height:36px;line-height:36px;font-size:25px;letter-spacing:-0.55px;color:#858585;-webkit-text-stroke:0.4px #858585;">3</div>
<div class="t m" style="left:1292px;width:100px;text-align:right;top:461.5px;height:36px;line-height:36px;font-size:25px;letter-spacing:-0.55px;color:#858585;-webkit-text-stroke:0.4px #858585;">4</div>
<div class="t m" style="left:1292px;width:100px;text-align:right;top:497.5px;height:36px;line-height:36px;font-size:25px;letter-spacing:-0.55px;color:#858585;-webkit-text-stroke:0.4px #858585;">5</div>
<div class="t m" style="left:1292px;width:100px;text-align:right;top:533.5px;height:36px;line-height:36px;font-size:25px;letter-spacing:-0.55px;color:#858585;-webkit-text-stroke:0.4px #858585;">6</div>
<div class="t m" style="left:1292px;width:100px;text-align:right;top:569.5px;height:36px;line-height:36px;font-size:25px;letter-spacing:-0.55px;color:#858585;-webkit-text-stroke:0.4px #858585;">7</div>
<div class="t m" style="left:1292px;width:100px;text-align:right;top:605.5px;height:36px;line-height:36px;font-size:25px;letter-spacing:-0.55px;color:#c6c6c6;-webkit-text-stroke:0.4px #c6c6c6;">8</div>
<div class="t m" style="left:1292px;width:100px;text-align:right;top:641.5px;height:36px;line-height:36px;font-size:25px;letter-spacing:-0.55px;color:#858585;-webkit-text-stroke:0.4px #858585;">9</div>
<div class="t m" style="left:1292px;width:100px;text-align:right;top:677.5px;height:36px;line-height:36px;font-size:25px;letter-spacing:-0.55px;color:#858585;-webkit-text-stroke:0.4px #858585;">10</div>
<div class="t m" style="left:1292px;width:100px;text-align:right;top:713.5px;height:36px;line-height:36px;font-size:25px;letter-spacing:-0.55px;color:#858585;-webkit-text-stroke:0.4px #858585;">11</div>
<div class="t m" style="left:1292px;width:100px;text-align:right;top:749.5px;height:36px;line-height:36px;font-size:25px;letter-spacing:-0.55px;color:#858585;-webkit-text-stroke:0.4px #858585;">12</div>
<div class="t m" style="left:1292px;width:100px;text-align:right;top:785.5px;height:36px;line-height:36px;font-size:25px;letter-spacing:-0.55px;color:#858585;-webkit-text-stroke:0.4px #858585;">13</div>
<div class="t m" style="left:1292px;width:100px;text-align:right;top:821.5px;height:36px;line-height:36px;font-size:25px;letter-spacing:-0.55px;color:#858585;-webkit-text-stroke:0.4px #858585;">14</div>
<div class="t m" style="left:1292px;width:100px;text-align:right;top:857.5px;height:36px;line-height:36px;font-size:25px;letter-spacing:-0.55px;color:#858585;-webkit-text-stroke:0.4px #858585;">15</div>
<svg class="a" style="left:1896px;top:352px;" width="79" height="80" viewBox="0 0 79 80"><g opacity="0.62"><rect x="7.8" y="0.5" width="1.4" height="2.4" fill="#777777"/><rect x="11.8" y="4.5" width="13.4" height="2.4" fill="#4f7186"/><rect x="25.8" y="4.5" width="3.4" height="2.4" fill="#777777"/><rect x="15.8" y="8.5" width="37.4" height="2.4" fill="#7a5546"/><rect x="53.8" y="8.5" width="1.4" height="2.4" fill="#777777"/><rect x="15.8" y="12.6" width="33.4" height="2.4" fill="#7a5546"/><rect x="11.8" y="16.6" width="3.4" height="2.4" fill="#777777"/><rect x="11.8" y="20.6" width="15.4" height="2.4" fill="#4f7186"/><rect x="27.8" y="20.6" width="3.4" height="2.4" fill="#777777"/><rect x="15.8" y="24.6" width="41.4" height="2.4" fill="#4f7186"/><rect x="57.8" y="24.6" width="1.4" height="2.4" fill="#777777"/><rect x="59.8" y="24.6" width="13.4" height="2.4" fill="#7a5546"/><rect x="73.8" y="24.6" width="1.4" height="2.4" fill="#777777"/><rect x="15.8" y="28.6" width="59.4" height="2.4" fill="#4f7186"/><rect x="75.8" y="28.6" width="2.2" height="2.4" fill="#777777"/><rect x="15.8" y="32.7" width="47.4" height="2.4" fill="#4f7186"/><rect x="63.8" y="32.7" width="3.4" height="2.4" fill="#777777"/><rect x="67.8" y="32.7" width="10.2" height="2.4" fill="#7a5546"/><rect x="15.8" y="36.7" width="47.4" height="2.4" fill="#4f7186"/><rect x="63.8" y="36.7" width="1.4" height="2.4" fill="#777777"/><rect x="65.8" y="36.7" width="12.2" height="2.4" fill="#7a5546"/><rect x="11.8" y="40.7" width="3.4" height="2.4" fill="#777777"/><rect x="11.8" y="44.7" width="13.4" height="2.4" fill="#4f7186"/><rect x="25.8" y="44.7" width="3.4" height="2.4" fill="#777777"/><rect x="29.8" y="44.7" width="7.4" height="2.4" fill="#7a5546"/><rect x="37.8" y="44.7" width="1.4" height="2.4" fill="#777777"/><rect x="11.8" y="48.7" width="33.4" height="2.4" fill="#4f7186"/><rect x="45.8" y="48.7" width="3.4" height="2.4" fill="#777777"/><rect x="49.8" y="48.7" width="27.4" height="2.4" fill="#7a5546"/><rect x="7.8" y="52.8" width="1.4" height="2.4" fill="#777777"/></g><rect x="7.8" y="28" width="70.2" height="4" fill="#1e3656"/><rect x="18" y="28" width="56" height="4" fill="#6e6e6e"/></svg>
<div class="a" style="left:870px;top:922px;width:1132px;height:54px;background:#202123;"></div>
<div class="a" style="left:870px;top:976px;width:398px;height:612px;background:#202123;"></div>
<div class="a" style="left:870px;top:976px;width:398px;height:78px;background:#2b2b2b;"></div>
<div class="a" style="left:880px;top:1066px;width:376px;height:64px;background:#2d2d2d;"></div>
<svg class="a" style="left:900px;top:936px;" width="30" height="30" viewBox="0 0 30 30"><path d="M25 10.5 V4.5 A2 2 0 0 0 23 2.5 H4.5 A2 2 0 0 0 2.500 4.5 V23 A2 2 0 0 0 4.5 25 H10.5" fill="none" stroke="#7a7a7a" stroke-width="1.8"/><path d="M11.5 11.5 L27 17.5 L20.8 20 L27.5 26.5 L25.5 28.3 L19 21.8 L16.6 27.5 Z" fill="#7a7a7a"/></svg>
<div class="t" style="left:951px;top:929.5px;height:38px;line-height:38px;font-size:24px;color:#e6e6e6;"><span class="c">视图</span></div>
<div class="t" style="left:1035px;top:929.5px;height:38px;line-height:38px;font-size:24px;color:#e6e6e6;"><span class="c">日志</span></div>
<div class="t" style="left:1119px;top:929.5px;height:38px;line-height:38px;font-size:24px;color:#e6e6e6;"><span class="c">网络</span></div>
<div class="t" style="left:1202px;top:929.5px;height:38px;line-height:38px;font-size:24px;color:#e6e6e6;"><span class="c">存储</span></div>
<div class="t" style="left:1286px;top:929.5px;height:38px;line-height:38px;font-size:24px;color:#e6e6e6;"><span class="c">编译日志</span></div>
<div class="t" style="left:1418px;top:928.2px;height:40px;line-height:40px;font-size:24.6px;color:#ffffff;letter-spacing:0.95px;-webkit-text-stroke:0.45px #fff;">Mock</div>
<div class="a" style="left:1418px;top:973px;width:62px;height:3px;background:#ffffff;"></div>
<div class="a" style="left:888px;top:1000px;width:28px;height:28px;background:#3388fc;border-radius:4px;"></div>
<svg class="a" style="left:888px;top:1000px;" width="28" height="28" viewBox="0 0 28 28"><path d="M6.2 14.8 L11.8 19.8 L21.8 8.8" fill="none" stroke="#fff" stroke-width="2.6"/></svg>
<div class="t" style="left:932px;top:996.8px;height:38px;line-height:38px;font-size:24px;color:#98989c;"><span class="c">启动</span><span style="letter-spacing:1px">Mock</span></div>
<svg class="a" style="left:1142px;top:1000px;" width="24" height="28" viewBox="0 0 24 28"><path d="M12 3 V17 M5 10.5 L12 17.5 L19 10.5 M2 23 H22" fill="none" stroke="#b4b4b4" stroke-width="2"/></svg>
<svg class="a" style="left:1178px;top:1000px;" width="24" height="28" viewBox="0 0 24 28"><path d="M12 18.5 V4.5 M5 11 L12 4 L19 11 M2 23 H22" fill="none" stroke="#b4b4b4" stroke-width="2"/></svg>
<svg class="a" style="left:1214px;top:1000px;" width="24" height="28" viewBox="0 0 24 28"><path d="M12 2 V25 M1 13.5 H23" fill="none" stroke="#b4b4b4" stroke-width="2"/></svg>
<div class="a" style="left:900px;top:1084px;width:28px;height:28px;background:#3388fc;border-radius:4px;"></div>
<svg class="a" style="left:900px;top:1084px;" width="28" height="28" viewBox="0 0 28 28"><path d="M6.2 14.8 L11.8 19.8 L21.8 8.8" fill="none" stroke="#fff" stroke-width="2.6"/></svg>
<div class="t" style="left:936px;top:1080.8px;height:38px;line-height:38px;font-size:24px;color:#a4a4a8;"><span class="c">未命名规则</span></div>
<svg class="a" style="left:1208px;top:1084px;" width="28" height="28" viewBox="0 0 28 28"><circle cx="14" cy="13.5" r="11.4" fill="none" stroke="#e0394d" stroke-width="2"/><path d="M14 7 V16" stroke="#e0394d" stroke-width="2.2"/><circle cx="14" cy="19.6" r="1.4" fill="#e0394d"/></svg>
<div class="a" style="left:1268px;top:976px;width:704px;height:612px;background:#1b1b1c;"></div>
<div class="t" style="left:1300px;top:998.6px;height:38px;line-height:38px;font-size:24px;color:#a8a8a8;"><span class="c">模拟类型</span></div>
<div class="a" style="left:1300px;top:1058px;width:28px;height:28px;background:#3388fc;border-radius:50%;"></div>
<div class="a" style="left:1309.8px;top:1067.8px;width:8.4px;height:8.4px;background:#fff;border-radius:50%;"></div>
<div class="t" style="left:1348.4px;top:1049.3px;height:46px;line-height:46px;font-size:28.6px;color:#3088f0;letter-spacing:-0.5px;">API</div>
<div class="a" style="left:1452px;top:1058px;width:28px;height:28px;background:#ffffff;border-radius:50%;box-sizing:border-box;border:2px solid #d6d6e0;"></div>
<div class="t" style="left:1499.5px;top:1049.3px;height:46px;line-height:46px;font-size:28.6px;color:#4b4b50;letter-spacing:1.2px;">H5</div>
<div class="t" style="left:1300px;top:1148.4px;height:38px;line-height:38px;font-size:24px;color:#a8a8a8;"><span style="letter-spacing:-0.9px">API</span><span class="c">信息</span></div>
<div class="t" style="left:1300px;top:1206.5px;height:38px;line-height:38px;font-size:24px;color:#707070;"><span style="letter-spacing:-0.9px">API</span><span class="c">接口</span></div>
<div class="a" style="left:1424px;top:1210px;width:456px;height:32px;background:#343434;border-radius:3px;"></div>
<div class="t" style="left:1300px;top:1300.5px;height:38px;line-height:38px;font-size:24px;color:#a8a8a8;"><span class="c">模拟返回</span></div>
<div class="t" style="left:1300px;top:1358.2px;height:38px;line-height:38px;font-size:24px;color:#707070;"><span class="c">模拟回调</span></div>
<div class="a" style="left:1436px;top:1362px;width:28px;height:28px;background:#3388fc;border-radius:50%;"></div>
<div class="a" style="left:1445.8px;top:1371.8px;width:8.4px;height:8.4px;background:#fff;border-radius:50%;"></div>
<div class="t" style="left:1484px;top:1353.3px;height:46px;line-height:46px;font-size:28.6px;color:#3088f0;letter-spacing:0.42px;">Success</div>
<div class="a" style="left:1654px;top:1362px;width:28px;height:28px;background:#ffffff;border-radius:50%;box-sizing:border-box;border:2px solid #d6d6e0;"></div>
<div class="t" style="left:1701.5px;top:1353.3px;height:46px;line-height:46px;font-size:28.6px;color:#4b4b50;letter-spacing:0.7px;">Fail</div>
<div class="t" style="left:1300px;top:1452.5px;height:38px;line-height:38px;font-size:24px;color:#5c5c5c;letter-spacing:-0.1px;">JSON <span class="c">数据包</span></div>
<div class="a" style="left:1300px;top:1548px;width:640px;height:40px;background:#171717;"></div>
<div class="a" style="left:1926px;top:1548px;width:14px;height:40px;background:#131313;"></div>
<div class="t m" style="left:1300px;width:71px;text-align:right;top:1549.5px;height:36px;line-height:36px;font-size:25px;color:#858585;">1</div>
<div class="a" style="left:1424px;top:1548px;width:28px;height:35.5px;background:#141d17;box-sizing:border-box;border:1.6px solid #868686;"></div>
<div class="t m" style="left:1423.8px;top:1549.5px;height:36px;line-height:36px;font-size:25px;letter-spacing:-0.55px;color:#d4d4d4;">{}</div>
<div class="a" style="left:1913px;top:1548px;width:13px;height:35.5px;background:#8e8e8e;"></div>
<div class="a" style="left:1847px;top:1548.5px;width:3.4px;height:3.4px;background:transparent;border-radius:50%;box-sizing:border-box;border:1px solid #666;"></div>
<div class="a" style="left:1972px;top:976px;width:30px;height:612px;background:#fafafa;overflow:hidden;">
<div class="a" style="left:0;top:0;width:1.4px;height:612px;background:#e6e6e6;"></div>
<div class="a" style="left:28.4px;top:0;width:1.6px;height:612px;background:#e8e8e8;"></div>
<div class="a" style="left:8px;top:-10px;width:16px;height:463.4px;background:#b6b6b6;border-radius:8px;"></div>
</div>
</div></div>
<div class="a" style="left:112px;top:76px;width:1890px;height:1512px;border-radius:20px;box-sizing:border-box;border:1px solid rgba(255,255,255,0.16);border-top-color:rgba(255,255,255,0.42);pointer-events:none;"></div>
</body></html>
